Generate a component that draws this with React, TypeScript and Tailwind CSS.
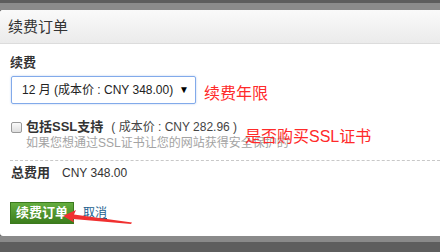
import React from "react";

const cjk = { fontFamily: '"Liberation Sans", "Noto Sans CJK SC", sans-serif' };

export default function App() {
  return (
    <div className="w-[440px] h-[252px] overflow-hidden bg-[#5e5e5e] flex flex-col relative" style={cjk}>
      <div className="h-[3px] bg-[#5d5d5d] shrink-0" />
      <div className="h-[7px] bg-[#8b8b8b] shrink-0" />
      <div className="h-[226px] bg-white rounded-l-[3px] shrink-0 flex flex-col relative">
        <div className="h-[34px] bg-gradient-to-b from-[#fafafa] to-[#ebebeb] border-b border-[#dcdcdc] rounded-tl-[3px] flex items-center pl-[8px]">
          <span className="text-[15px] leading-[20px] text-[#333]">续费订单</span>
        </div>
        <div className="pl-[10px] pt-[10px] flex flex-col">
          <div className="text-[13px] leading-[18px] font-bold text-[#333]">续费</div>
          <div className="mt-[4px] flex items-center gap-[8px]">
            <div className="ml-[1px] w-[185px] h-[28px] border border-[#82aaea] rounded-[2px] shadow-[0_0_2px_rgba(100,150,230,0.5)] flex items-center pl-[10px] pr-[6px] justify-between">
              <span className="text-[12px] leading-[16px] text-[#222]">12 月 (成本价 : CNY 348.00)</span>
              <span className="text-[10px] leading-[12px] text-black">▼</span>
            </div>
            <span className="text-[16px] leading-[20px] text-[#ff2a2a] mt-[8px]">续费年限</span>
          </div>
          <div className="mt-[15px] flex items-center h-[16px]">
            <div className="ml-[1px] w-[11px] h-[11px] border border-[#9a9a9a] rounded-[2px] bg-gradient-to-b from-[#fafafa] to-[#dedede]" />
            <span className="ml-[4px] text-[13px] leading-[16px] font-bold text-[#333]">包括SSL支持</span>
            <span className="ml-[8px] text-[12px] leading-[16px] text-[#444]">( 成本价 : CNY 282.96 )</span>
          </div>
          <div className="pl-[16px] text-[12px] leading-[16px] text-[#a3a3a3] whitespace-nowrap">如果您想通过SSL证书让您的网站获得安全保护的</div>
          <div className="mt-[9px] border-t border-dashed border-[#c8c8c8]" />
          <div className="mt-[3px] flex items-center h-[18px]">
            <span className="ml-[1px] text-[13px] leading-[18px] font-bold text-[#333]">总费用</span>
            <span className="ml-[12px] text-[12px] leading-[18px] text-[#333]">CNY 348.00</span>
          </div>
          <div className="mt-[20px] flex items-center">
            <button className="h-[22px] w-[64px] border border-[#3b7a1d] bg-gradient-to-b from-[#64ad3f] to-[#3c7e1c] text-white text-[13px] font-bold leading-[20px] flex items-center justify-center">续费订单</button>
            <a className="ml-[9px] text-[12px] leading-[16px] text-[#1b5f8f] underline">取消</a>
          </div>
        </div>
        <span className="absolute left-[245px] top-[117px] text-[16px] leading-[20px] text-[#ff2a2a] whitespace-nowrap">是否购买SSL证书</span>
        <svg className="absolute left-0 top-0" width="440" height="226" viewBox="0 10 440 226">
          <polygon points="63,216 76,210 74,214.5 132,222.5 131,224 73,219 74,222.5" fill="#f03030" />
        </svg>
      </div>
      <div className="h-[6px] bg-[#8a8a8a] shrink-0" />
      <div className="flex-1 bg-[#5e5e5e]" />
    </div>
  );
}
